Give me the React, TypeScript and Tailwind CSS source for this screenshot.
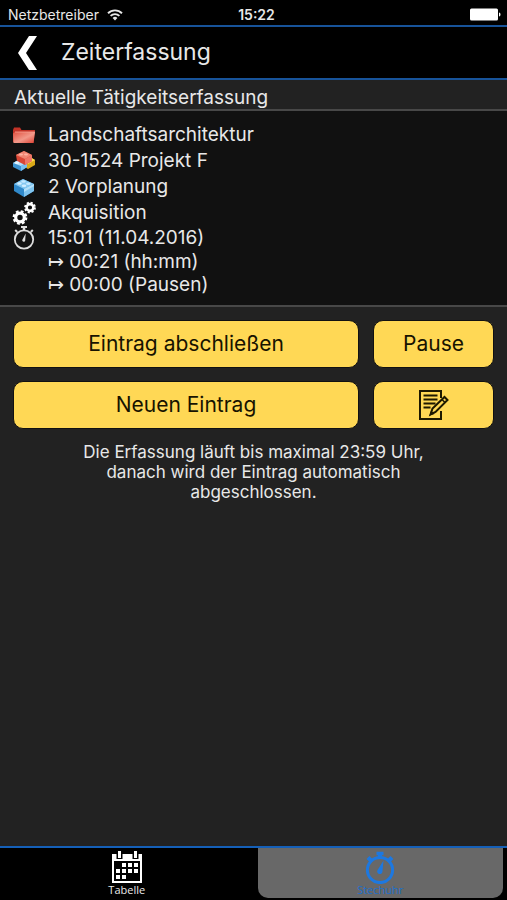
import type { ReactNode } from "react"

function WifiIcon() {
  return (
    <svg width="16" height="12" viewBox="0 0 16 12" fill="none" stroke="#e8e8e8" strokeWidth="1.9" aria-hidden="true">
      <path d="M1 4.2a10 10 0 0 1 14 0" />
      <path d="M3.6 6.9a6.3 6.3 0 0 1 8.8 0" />
      <path d="M8 11.4 5.6 9a3.4 3.4 0 0 1 4.8 0z" fill="#e8e8e8" stroke="none" />
    </svg>
  )
}

function BatteryIcon() {
  return (
    <svg width="31" height="13" viewBox="0 0 31 13" fill="#fff" aria-hidden="true">
      <rect x="0" y="0.5" width="28" height="12" rx="1.5" />
      <path d="M29 4.5c2 .6 2 3.4 0 4z" />
    </svg>
  )
}

function FolderIcon() {
  return (
    <svg width="24" height="18" viewBox="0 0 24 18" aria-hidden="true">
      <defs>
        <linearGradient id="folder" x1="0" y1="0" x2="1" y2="1">
          <stop offset="0" stopColor="#e2503f" />
          <stop offset="0.55" stopColor="#f2998a" />
          <stop offset="1" stopColor="#dd4032" />
        </linearGradient>
      </defs>
      <path d="M1 16V4l1-2.500h6L9.500 4H23l-1.500 13z" fill="#c33327" />
      <path d="M1 7.500 3 6h20l-1.500 11H1.500z" fill="url(#folder)" />
      <path d="M3 6h20" stroke="#f7a698" strokeWidth="0.8" />
    </svg>
  )
}

function BricksIcon() {
  return (
    <svg width="24" height="22" viewBox="0 0 24 22" aria-hidden="true">
      <path d="m11 11 7-4 5 3v5l-7 4-5-3z" fill="#d9a818" />
      <path d="m11 11 7-4 5 3-7 4z" fill="#ffe25a" />
      <path d="m1 13 7-4 7 3v5l-6 4-8-4z" fill="#3d94d3" />
      <path d="m1 13 7-4 7 3-6 4z" fill="#b4e0fa" />
      <path d="m9 16 6-4v5l-6 4z" fill="#79c0ee" />
      <path d="m4 5 8-4 8 4v6l-7 4-8-4z" fill="#d94635" />
      <path d="m4 5 8-4 8 4-7 4z" fill="#f08673" />
      <path d="m13 9 7-4v6l-7 4z" fill="#ee7767" />
      <ellipse cx="9" cy="4.5" rx="2" ry="1.1" fill="#ffb3a3" />
      <ellipse cx="14" cy="4.5" rx="2" ry="1.1" fill="#ffb3a3" />
      <ellipse cx="5" cy="12.8" rx="2" ry="1.2" fill="#e6f6ff" />
    </svg>
  )
}

function BrickIcon() {
  return (
    <svg width="24" height="20" viewBox="0 0 24 20" aria-hidden="true">
      <path d="m2 7 9-5 11 5v7l-10 6-10-6z" fill="#3089ca" />
      <path d="m2 7 9-5 11 5-10 5z" fill="#84c8f1" />
      <path d="m12 12 10-5v7l-10 6z" fill="#7fc4ef" />
      <path d="m12 12 10-5v2l-10 6z" fill="#b3e0fa" />
      <ellipse cx="7.5" cy="6.5" rx="2.3" ry="1.3" fill="#d2edff" />
      <ellipse cx="11.5" cy="4.5" rx="2.3" ry="1.3" fill="#c4e8ff" />
      <ellipse cx="12" cy="8.7" rx="2.3" ry="1.3" fill="#d2edff" />
      <ellipse cx="16.3" cy="6.7" rx="2.3" ry="1.3" fill="#c4e8ff" />
    </svg>
  )
}

function GearsIcon() {
  return (
    <svg width="24" height="24" viewBox="0 0 24 24" fill="none" stroke="#fff" aria-hidden="true">
      <circle cx="8" cy="16.5" r="4.3" strokeWidth="3.2" />
      <circle cx="8" cy="16.5" r="6.2" strokeWidth="2.4" strokeDasharray="2.7 2.17" />
      <circle cx="18" cy="6.5" r="3.4" strokeWidth="2.6" />
      <circle cx="18" cy="6.5" r="4.9" strokeWidth="2" strokeDasharray="2.1 1.748" />
    </svg>
  )
}

function StopwatchIcon() {
  return (
    <svg width="24" height="24" viewBox="0 0 24 24" fill="none" stroke="#ddd" aria-hidden="true">
      <circle cx="12" cy="13.5" r="9.2" strokeWidth="1.8" />
      <path d="M12 4.5V1" strokeWidth="2.5" />
      <path d="M9 1h6" strokeWidth="2" />
      <path d="m3.2 4 2 2M20.8 4l-2 2" strokeWidth="2" />
      <path d="m13.7 7.5-.5 6.4a1.500 1.500 0 1 1-2.400-.800z" fill="#ddd" stroke="none" />
    </svg>
  )
}

function NoteIcon() {
  return (
    <svg width="30" height="30" viewBox="0 0 30 30" fill="none" stroke="#1e1900" strokeWidth="2" aria-hidden="true">
      <path d="M22 8V1H1v28h21v-8" />
      <path d="M4.500 5.500h14M4.500 9.500h14M4.500 13.500h12M4.500 17.500h7" strokeWidth="1.8" />
      <path d="m11.500 24.500 2-6L25.500 7l3 3-12 12z" strokeWidth="2" />
      <path d="m10.500 25.500 1.500-5 3.500 3.500z" fill="#1e1900" stroke="none" />
      <path d="m23 9.500 3 3" strokeWidth="1.5" />
    </svg>
  )
}

function CalendarIcon() {
  const cells = [
    [11, 12], [17, 12], [23, 12],
    [11, 18], [17, 18], [23, 18],
    [5, 18], [5, 24], [11, 24],
  ]
  return (
    <svg width="32" height="33" viewBox="0 0 32 33" aria-hidden="true">
      <path d="M1 3h30v29H1z" fill="#fff" />
      <path d="M3 10h26v20H3z" fill="#000" />
      <path d="M5.500 0h6v8h-6zM21.500 0h6v8h-6z" fill="#000" />
      <path d="M7 0h3v7H7zM23 0h3v7h-3z" fill="#fff" />
      {cells.map(([x, y]) => (
        <rect key={`${x}-${y}`} x={x} y={y} width="4" height="4" fill="#fff" />
      ))}
    </svg>
  )
}

function ClockTabIcon() {
  return (
    <svg width="32" height="33" viewBox="0 0 32 33" fill="none" stroke="#1d78e0" aria-hidden="true">
      <circle cx="16" cy="19" r="12.6" strokeWidth="3" />
      <path d="M16 6V2" strokeWidth="4" />
      <path d="M12.500 2.500h7" strokeWidth="3.500" />
      <path d="m4 6.500 3 3M28 6.500l-3 3" strokeWidth="4" />
      <path d="m19.500 9.500-1 10.500a2.700 2.700 0 1 1-4.600-1.500z" fill="#1d78e0" stroke="none" />
    </svg>
  )
}

function Entry({ icon, children }: { icon: ReactNode; children: ReactNode }) {
  return (
    <li className="flex h-[26px] items-center gap-3 last:h-6">
      {icon}
      <span>{children}</span>
    </li>
  )
}

const buttonClass =
  "flex h-12 items-center justify-center rounded-[10px] border border-[#111] bg-[#ffd855] text-[21px] text-[#171300]"

export default function App() {
  return (
    <div className="flex min-h-screen flex-col bg-[#222] font-['Inter','Liberation_Sans',sans-serif] text-[#e8e8e8]">
      <div className="grid h-[25px] grid-cols-3 items-center bg-black pt-1 pr-1.5 pl-2 text-sm">
        <div className="flex items-center gap-2">
          <span>Netzbetreiber</span>
          <WifiIcon />
        </div>
        <span className="pl-1 text-center font-semibold">15:22</span>
        <div className="flex justify-end">
          <BatteryIcon />
        </div>
      </div>

      <header className="flex h-[55px] items-center gap-6 border-y-2 border-[#17539a] bg-black pl-[17px]">
        <button type="button" aria-label="Zurück">
          <svg width="20" height="34" viewBox="0 0 20 34" fill="#fff" aria-hidden="true">
            <path d="M12 0h8L9 17l11 17h-8L1 17z" />
          </svg>
        </button>
        <h1 className="text-[23px]">Zeiterfassung</h1>
      </header>

      <main className="flex-1">
        <h2 className="border-b-2 border-[#484848] px-3.5 pt-1.5 text-[19px] leading-[23px]">Aktuelle Tätigkeitserfassung</h2>

        <section className="border-b-2 border-[#484848] bg-[#111] px-3 pt-[11px] pb-[9px] text-[19px]">
          <ul>
            <Entry icon={<FolderIcon />}>Landschaftsarchitektur</Entry>
            <Entry icon={<BricksIcon />}>30-1524 Projekt F</Entry>
            <Entry icon={<BrickIcon />}>2 Vorplanung</Entry>
            <Entry icon={<GearsIcon />}>Akquisition</Entry>
            <Entry icon={<StopwatchIcon />}>15:01 (11.04.2016)</Entry>
          </ul>
          <div className="pl-9 leading-[23px]">
            <p>↦ 00:21 (hh:mm)</p>
            <p>↦ 00:00 (Pausen)</p>
          </div>
        </section>

        <div className="grid grid-cols-[1fr_121px] gap-x-3.5 gap-y-[13px] px-[13px] pt-[13px]">
          <button type="button" className={buttonClass}>Eintrag abschließen</button>
          <button type="button" className={buttonClass}>Pause</button>
          <button type="button" className={buttonClass}>Neuen Eintrag</button>
          <button type="button" aria-label="Notiz bearbeiten" className={buttonClass}>
            <NoteIcon />
          </button>
        </div>

        <p className="mx-auto max-w-[360px] pt-[13px] text-center text-[17px] leading-5">
          Die Erfassung läuft bis maximal 23:59 Uhr, danach wird der Eintrag automatisch abgeschlossen.
        </p>
      </main>

      <nav className="grid h-[54px] grid-cols-2 border-t-2 border-[#1560b8] bg-black pb-0.5 font-['Open_Sans',sans-serif] text-[11px] leading-3">
        <a href="#tabelle" className="flex flex-col items-center pt-[3px]">
          <CalendarIcon />
          <span>Tabelle</span>
        </a>
        <a
          href="#stechuhr"
          aria-current="page"
          className="mx-1 flex flex-col items-center rounded-b-[10px] bg-[#686868] pt-[3px] text-[#1d6fcb]"
        >
          <ClockTabIcon />
          <span>Stechuhr</span>
        </a>
      </nav>
    </div>
  )
}
